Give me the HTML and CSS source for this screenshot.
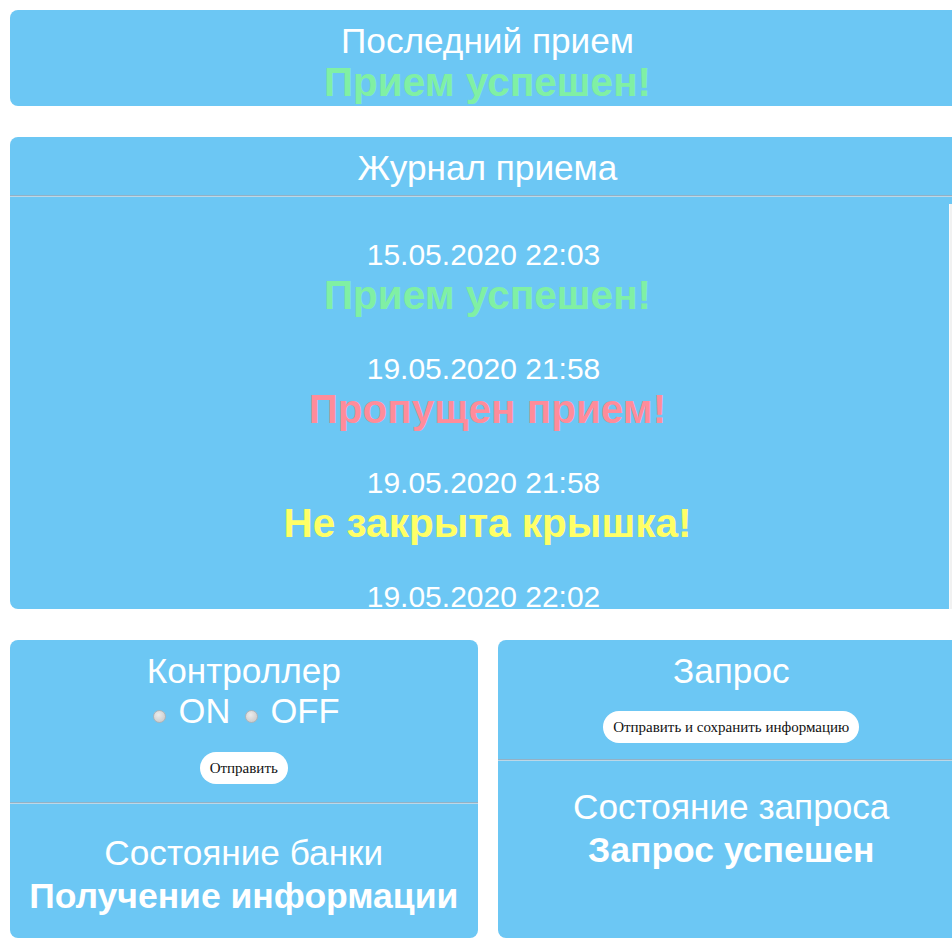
FILE: index.html
```html
<!DOCTYPE html>
<html lang="ru">
<head>
<meta charset="utf-8">
<title>Кормушка</title>
<link rel="stylesheet" href="styles.css">
</head>
<body>
<main class="page">
  <section class="card card-last">
    <div class="card-title">Последний прием</div>
    <div class="status status-ok">Прием успешен!</div>
  </section>

  <section class="card card-journal">
    <div class="card-title">Журнал приема</div>
    <hr class="divider divider-journal">
    <div class="journal-frame">
      <div class="journal">
        <div class="entry">
          <div class="entry-date">15.05.2020 22:03</div>
          <div class="status status-ok">Прием успешен!</div>
        </div>
        <div class="entry">
          <div class="entry-date">19.05.2020 21:58</div>
          <div class="status status-missed">Пропущен прием!</div>
        </div>
        <div class="entry">
          <div class="entry-date">19.05.2020 21:58</div>
          <div class="status status-lid">Не закрыта крышка!</div>
        </div>
        <div class="entry">
          <div class="entry-date">19.05.2020 22:02</div>
          <div class="status status-ok">Прием успешен!</div>
        </div>
      </div>
      <div class="scrollbar" aria-hidden="true">
        <div class="scrollbar-btn"></div>
        <div class="scrollbar-thumb"></div>
      </div>
    </div>
  </section>

  <div class="panels">
    <section class="card panel panel-controller">
      <form class="panel-top">
        <div class="card-title">Контроллер</div>
        <div class="switch">
          <label class="switch-option"><input class="radio" type="radio" name="power" value="on"> ON</label>
          <label class="switch-option"><input class="radio" type="radio" name="power" value="off"> OFF</label>
        </div>
        <button class="btn" type="button">Отправить</button>
      </form>
      <hr class="divider">
      <div class="panel-bottom">
        <div class="card-title">Состояние банки</div>
        <div class="state">Получение информации</div>
      </div>
    </section>

    <section class="card panel panel-request">
      <form class="panel-top">
        <div class="card-title">Запрос</div>
        <button class="btn" type="button">Отправить и сохранить информацию</button>
      </form>
      <hr class="divider">
      <div class="panel-bottom">
        <div class="card-title">Состояние запроса</div>
        <div class="state">Запрос успешен</div>
      </div>
    </section>
  </div>
</main>
</body>
</html>
```

FILE: styles.css
```css
html {
  overflow: hidden;
}

body {
  margin: 0;
  background: #ffffff;
  font-family: "Liberation Sans", Arial, sans-serif;
  color: #ffffff;
}

.page {
  width: 955px;
  padding: 10px;
  display: flex;
  flex-direction: column;
  gap: 31px;
}

/* Blue rounded cards */
.card {
  background: #6cc7f4;
  border-radius: 8px;
  text-align: center;
  overflow: hidden;
}

.card-title {
  font-size: 35.2px;
  line-height: 37px;
}

.status {
  font-size: 40.5px;
  line-height: 46px;
  font-weight: bold;
}

.status-ok {
  color: #80f0a4;
}

.status-missed {
  color: #ff8c9a;
}

.status-lid {
  color: #ffff66;
}

.card-last {
  padding: 12px 0 1px;
}

.card-journal {
  padding-top: 12px;
}

/* Thin two-tone rule between card sections */
.divider {
  height: 0;
  margin: 0;
  border: 0;
  border-top: 1px solid #93b1c5;
  border-bottom: 1px solid #bcd7e7;
}

.divider-journal {
  margin: 9px 0 7px;
}

/* Scrollable log of feeding events with a classic-looking track */
.journal-frame {
  display: flex;
  height: 405px;
}

.journal {
  flex: 1;
  padding-left: 16px;
  overflow-y: auto;
  scrollbar-width: none;
}

.journal::-webkit-scrollbar {
  display: none;
}

.scrollbar {
  width: 15px;
  flex: none;
  display: flex;
  flex-direction: column;
  background: #f1f1f1;
  border-left: 1px solid #fafafa;
}

.scrollbar-btn {
  height: 17px;
}

.scrollbar-thumb {
  height: 190px;
  margin: 0 2px;
  background: #c1c1c1;
}

.entry {
  padding-top: 34px;
}

.entry-date {
  font-size: 30px;
  line-height: 34px;
  padding-right: 8px;
}

/* Bottom pair of panels */
.panels {
  display: grid;
  grid-template-columns: 1fr 1fr;
  gap: 20px;
}

.panel {
  padding-bottom: 23px;
}

.panel-top {
  margin: 0;
  padding: 12px 0 16px;
  display: flex;
  flex-direction: column;
  align-items: center;
}

.panel-controller .panel-top {
  padding-bottom: 18px;
}

.switch {
  font-size: 34.5px;
  line-height: 37px;
  margin-top: 4px;
}

.switch-option {
  cursor: pointer;
}

.radio {
  appearance: none;
  -webkit-appearance: none;
  width: 13px;
  height: 13px;
  margin: 3px 3px 0 5px;
  border-radius: 50%;
  border: 1px solid #aeb4b8;
  background: radial-gradient(circle at 40% 35%, #ececec 0%, #d6d6d6 55%, #c4c4c4 100%);
  box-sizing: border-box;
}

.btn {
  margin-top: 22px;
  padding: 7px 10px;
  border: 0;
  border-radius: 16px;
  background: #ffffff;
  color: #111111;
  font-family: "Liberation Serif", "Times New Roman", serif;
  font-size: 15px;
  line-height: 18px;
  cursor: pointer;
}

.panel-bottom {
  padding-top: 27px;
}

.panel-controller .panel-bottom {
  padding-top: 30px;
}

.state {
  font-size: 35.5px;
  line-height: 37px;
  font-weight: bold;
  margin-top: 7px;
}
```
